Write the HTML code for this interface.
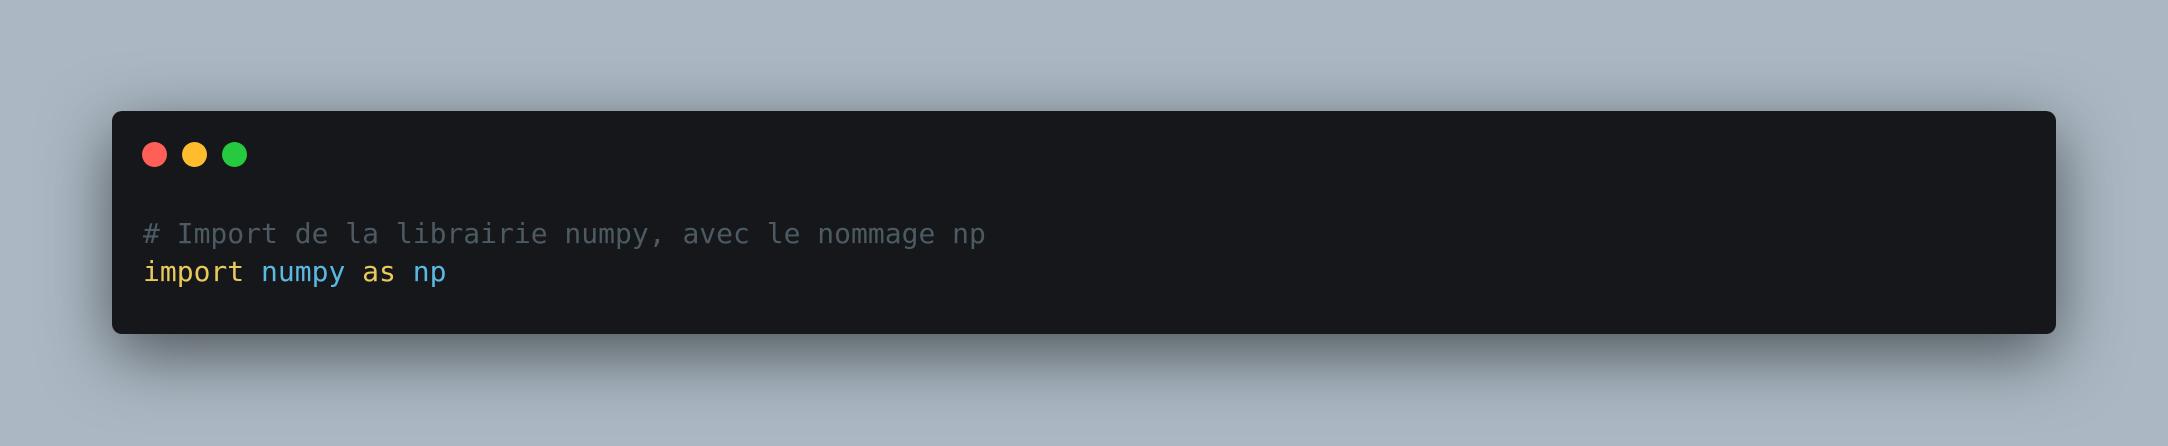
<!DOCTYPE html>
<html><head><meta charset="utf-8"><style>
html,body{margin:0;padding:0}
body{width:2168px;height:446px;background:#abb8c3;position:relative;overflow:hidden}
.win{position:absolute;left:112px;top:111px;width:1944px;height:223px;background:#16171a;border-radius:10px;box-shadow:0 20px 68px rgba(0,0,0,0.55)}
.dot{position:absolute;top:31px;width:25px;height:25px;border-radius:50%}
pre{position:absolute;left:31px;top:104px;margin:0;font-family:"DejaVu Sans Mono","Liberation Mono",monospace;font-size:28px;line-height:38px;color:#4b5a63}
.y{color:#e7c95c}.b{color:#5ab9e2}
</style></head><body>
<div class="win">
<div class="dot" style="left:29.5px;background:#ff5f56"></div>
<div class="dot" style="left:69.5px;background:#ffbd2e"></div>
<div class="dot" style="left:109.5px;background:#27c93f"></div>
<pre># Import de la librairie numpy, avec le nommage np
<span class="y">import</span> <span class="b">numpy</span> <span class="y">as</span> <span class="b">np</span></pre>
</div>
</body></html>
